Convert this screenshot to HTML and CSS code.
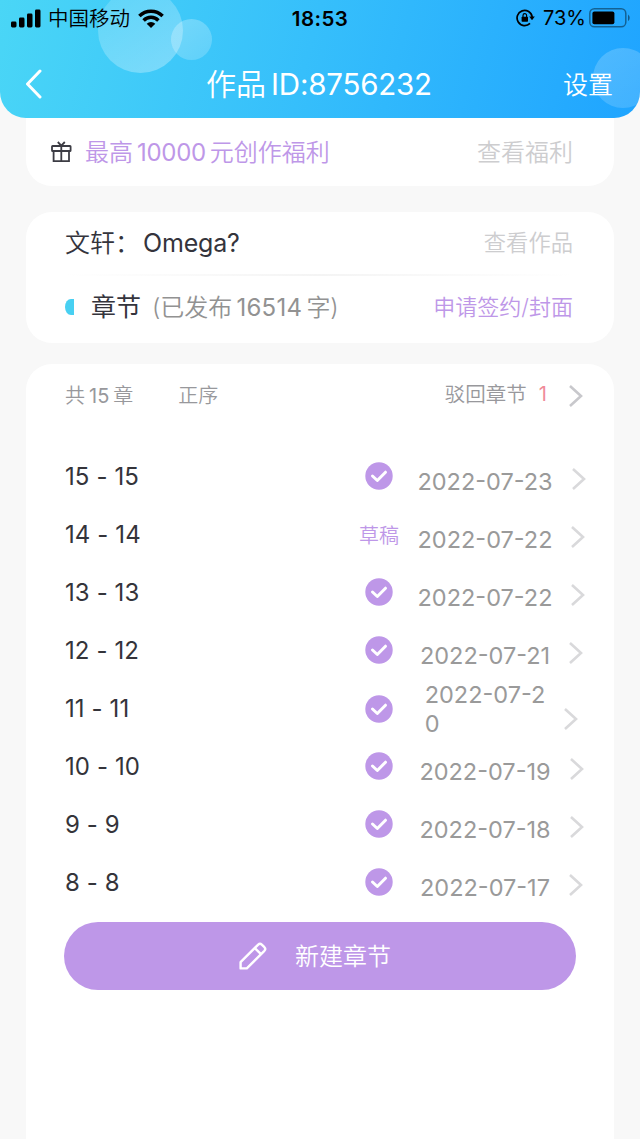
FILE: index.html
```html
<!DOCTYPE html>
<html lang="zh-CN">
<head>
    <meta charset="UTF-8">
    <meta name="viewport" content="width=device-width, initial-scale=1.0">
    <title>作品ID:8756232</title>
    <link rel="stylesheet" href="styles.css">
</head>
<body>
    <div class="wrapper">
        <header class="header">
            <span class="bubble bubble-big"></span>
            <span class="bubble bubble-small"></span>
            <span class="bubble bubble-right"></span>
            <div class="status-bar">
                <div class="status-left">
                    <svg class="signal" width="30" height="19" viewBox="0 0 30 19">
                        <rect x="0" y="12.5" width="5.5" height="6" rx="1.4"/>
                        <rect x="8" y="8.5" width="5.5" height="10" rx="1.4"/>
                        <rect x="16" y="4.5" width="5.5" height="14" rx="1.4"/>
                        <rect x="24" y="0.5" width="5.5" height="18" rx="1.4"/>
                    </svg>
                    <span class="carrier">中国移动</span>
                    <svg class="wifi" width="26" height="19" viewBox="0 0 26 19">
                        <g fill="none" stroke="#000" stroke-width="3.5">
                            <path d="M1.4 7.1A16.4 16.4 0 0 1 24.6 7.1"/>
                            <path d="M5.6 11.4A10.5 10.5 0 0 1 20.4 11.4"/>
                        </g>
                        <path d="M13 19L8.7 14.7A6.2 6.2 0 0 1 17.3 14.7Z"/>
                    </svg>
                </div>
                <span class="time">18:53</span>
                <div class="status-right">
                    <svg class="lock" width="19" height="18" viewBox="0 0 19 18">
                        <path d="M16.2 8A7.6 7.6 0 1 0 14 14.4" fill="none" stroke="#000" stroke-width="1.7"/>
                        <path d="M13.2 7.4h5.6l-2.8 3.8z"/>
                        <rect x="5.6" y="7.7" width="6.4" height="5" rx="0.7"/>
                        <path d="M7 8V6.4a1.8 1.8 0 0 1 3.6 0V8" fill="none" stroke="#000" stroke-width="1.2"/>
                    </svg>
                    <span class="percent">73%</span>
                    <svg class="battery" width="42" height="20" viewBox="0 0 42 20">
                        <rect x="0.8" y="0.8" width="36" height="18" rx="4.6" fill="none" stroke="#000" stroke-opacity="0.42" stroke-width="1.5"/>
                        <rect x="3.4" y="3.4" width="22" height="12.8" rx="2"/>
                        <path d="M39 6.4a4.2 4.2 0 0 1 0 6.8z" fill-opacity="0.45"/>
                    </svg>
                </div>
            </div>
            <div class="nav">
                <svg class="back" width="18" height="30" viewBox="0 0 18 30">
                    <path d="M15 2L2.5 15L15 28" fill="none" stroke="#fff" stroke-width="3" stroke-linecap="round" stroke-linejoin="round"/>
                </svg>
                <h1>作品<span class="title-id">ID:8756232</span></h1>
                <a class="setting">设置</a>
            </div>
        </header>

        <main>
            <section class="card welfare">
                <svg class="gift" width="22" height="22" viewBox="0 0 22 22" fill="none" stroke="#3c3c44" stroke-width="1.8">
                    <rect x="1" y="5" width="18.6" height="5" rx="0.6"/>
                    <path d="M2.6 10V20.2H18V10M10.3 5V20.2M6.8 1L10.3 4.6L13.8 1"/>
                </svg>
                <span class="welfare-text">最高<span class="num">10000</span>元创作福利</span>
                <a class="look">查看福利</a>
            </section>

            <section class="card work">
                <div class="work-row">
                    <span class="work-name">文轩：<span class="omega">Omega?</span></span>
                    <a class="look-work">查看作品</a>
                </div>
                <div class="line"></div>
                <div class="work-row">
                    <i class="mark"></i>
                    <span class="chapter">章节</span>
                    <span class="words">(已发布<span class="num">16514</span>字)</span>
                    <a class="sign">申请签约/封面</a>
                </div>
            </section>

            <section class="card list">
                <div class="list-head">
                    <span>共<span class="num">15</span>章</span>
                    <span class="order">正序</span>
                    <span class="reject">驳回章节</span>
                    <span class="reject-num">1</span>
                    <svg class="arrow" width="16" height="24" viewBox="0 0 16 24"><path d="M2 2L13 12L2 22"/></svg>
                </div>
                <ul>
                    <li>
                        <span class="name">15 - 15</span>
                        <span class="state"><svg class="check" width="28" height="28" viewBox="0 0 28 28"><circle cx="14" cy="14" r="13.7"/><path d="M7.5 14L12.3 18.5L20.5 10.2"/></svg></span>
                        <span class="date"><span>2022-07-23</span><svg class="arrow" width="16" height="24" viewBox="0 0 16 24"><path d="M2 2L13 12L2 22"/></svg></span>
                    </li>
                    <li>
                        <span class="name">14 - 14</span>
                        <span class="state">草稿</span>
                        <span class="date"><span>2022-07-22</span><svg class="arrow" width="16" height="24" viewBox="0 0 16 24"><path d="M2 2L13 12L2 22"/></svg></span>
                    </li>
                    <li>
                        <span class="name">13 - 13</span>
                        <span class="state"><svg class="check" width="28" height="28" viewBox="0 0 28 28"><circle cx="14" cy="14" r="13.7"/><path d="M7.5 14L12.3 18.5L20.5 10.2"/></svg></span>
                        <span class="date"><span>2022-07-22</span><svg class="arrow" width="16" height="24" viewBox="0 0 16 24"><path d="M2 2L13 12L2 22"/></svg></span>
                    </li>
                    <li>
                        <span class="name">12 - 12</span>
                        <span class="state"><svg class="check" width="28" height="28" viewBox="0 0 28 28"><circle cx="14" cy="14" r="13.7"/><path d="M7.5 14L12.3 18.5L20.5 10.2"/></svg></span>
                        <span class="date"><span>2022-07-21</span><svg class="arrow" width="16" height="24" viewBox="0 0 16 24"><path d="M2 2L13 12L2 22"/></svg></span>
                    </li>
                    <li>
                        <span class="name">11 - 11</span>
                        <span class="state"><svg class="check" width="28" height="28" viewBox="0 0 28 28"><circle cx="14" cy="14" r="13.7"/><path d="M7.5 14L12.3 18.5L20.5 10.2"/></svg></span>
                        <span class="date date-wrap"><span>2022-07-2<br>0</span><svg class="arrow" width="16" height="24" viewBox="0 0 16 24"><path d="M2 2L13 12L2 22"/></svg></span>
                    </li>
                    <li>
                        <span class="name">10 - 10</span>
                        <span class="state"><svg class="check" width="28" height="28" viewBox="0 0 28 28"><circle cx="14" cy="14" r="13.7"/><path d="M7.5 14L12.3 18.5L20.5 10.2"/></svg></span>
                        <span class="date"><span>2022-07-19</span><svg class="arrow" width="16" height="24" viewBox="0 0 16 24"><path d="M2 2L13 12L2 22"/></svg></span>
                    </li>
                    <li>
                        <span class="name">9 - 9</span>
                        <span class="state"><svg class="check" width="28" height="28" viewBox="0 0 28 28"><circle cx="14" cy="14" r="13.7"/><path d="M7.5 14L12.3 18.5L20.5 10.2"/></svg></span>
                        <span class="date"><span>2022-07-18</span><svg class="arrow" width="16" height="24" viewBox="0 0 16 24"><path d="M2 2L13 12L2 22"/></svg></span>
                    </li>
                    <li>
                        <span class="name">8 - 8</span>
                        <span class="state"><svg class="check" width="28" height="28" viewBox="0 0 28 28"><circle cx="14" cy="14" r="13.7"/><path d="M7.5 14L12.3 18.5L20.5 10.2"/></svg></span>
                        <span class="date"><span>2022-07-17</span><svg class="arrow" width="16" height="24" viewBox="0 0 16 24"><path d="M2 2L13 12L2 22"/></svg></span>
                    </li>
                </ul>
                <button class="new-btn">
                    <svg width="28" height="28" viewBox="0 0 28 28" fill="none" stroke="#fff" stroke-width="2.4" stroke-linejoin="round">
                        <path d="M1.6 26.4V20.2L19.2 2.6Q21 0.9 22.8 2.6L25.4 5.2Q27.1 7 25.4 8.8L7.8 26.4Z"/>
                        <path d="M15.8 6L22 12.2"/>
                    </svg>
                    <span>新建章节</span>
                </button>
            </section>
        </main>
    </div>
</body>
</html>
```
FILE: styles.css
```css
*{
    box-sizing: border-box;
}
body{
    margin: 0;
    background-color: #f8f8f8;
    font-family: Inter, "Noto Sans CJK SC", sans-serif;
    font-weight: 350;
}
.wrapper{
    width: 640px;
    height: 1139px;
    margin: 0 auto;
    overflow: hidden;
    display: flex;
    flex-direction: column;
}
/* 상단 헤더 */
.header{
    position: relative;
    height: 118px;
    flex: none;
    overflow: hidden;
    border-radius: 0 0 26px 26px;
    background: linear-gradient(105deg, #4ad6f6 0%, #36bffb 48%, #1fa4ff 100%);
}
.bubble{
    position: absolute;
    border-radius: 50%;
    background: linear-gradient(150deg, rgba(255,255,255,0.14), rgba(255,255,255,0.32));
}
.bubble-big{
    width: 85px;
    height: 85px;
    left: 98px;
    top: -12px;
}
.bubble-small{
    width: 41px;
    height: 41px;
    left: 171px;
    top: 19px;
    background: linear-gradient(150deg, rgba(255,255,255,0.28), rgba(255,255,255,0.18));
}
.bubble-right{
    width: 60px;
    height: 60px;
    left: 593px;
    top: 48px;
    background: linear-gradient(150deg, rgba(255,255,255,0.2), rgba(255,255,255,0.14));
}
.status-bar{
    position: relative;
    height: 36px;
    display: grid;
    grid-template-columns: 1fr auto 1fr;
    align-items: center;
    padding: 0 9px 0 11px;
    color: #000;
    font-size: 20px;
    font-weight: 400;
}
.status-left, .status-right{
    display: flex;
    align-items: center;
}
.carrier{
    font-size: 20.5px;
    font-weight: 350;
    margin: 0 8px 0 7px;
    padding-bottom: 2px;
}
.time{
    font-weight: 600;
    font-size: 20.5px;
    letter-spacing: 0.4px;
    margin-right: 2px;
}
.status-right{
    justify-content: flex-end;
}
.percent{
    margin: 0 3px 0 8px;
}
.nav{
    position: relative;
    height: 96px;
    display: grid;
    grid-template-columns: 1fr auto 1fr;
    align-items: center;
    padding: 0 27px 0 25px;
    color: #fff;
}
.nav h1{
    margin: 0;
    padding-bottom: 5px;
    font-size: 30px;
    font-weight: 350;
    white-space: nowrap;
}
.title-id{
    margin-left: 5px;
    font-size: 29.5px;
    font-weight: 400;
    letter-spacing: -0.2px;
}
.setting{
    justify-self: end;
    padding-bottom: 3px;
    font-size: 25px;
}
/* 카드 영역 */
main{
    flex: 1;
    display: flex;
    flex-direction: column;
    padding: 0 26px;
}
.card{
    background-color: #fff;
    border-radius: 26px;
}
.num{
    margin: 0 4px;
    font-weight: 400;
}
.welfare{
    height: 68px;
    display: flex;
    align-items: center;
    padding: 0 41px 0 25px;
    border-radius: 0 0 26px 26px;
    font-size: 24px;
}
.welfare-text{
    margin-left: 12px;
    color: #be97e8;
}
.welfare-text .num{
    letter-spacing: -0.3px;
}
.welfare-text, .look{
    padding-bottom: 4px;
}
.look, .look-work{
    margin-left: auto;
    color: #cdcdcf;
}
.look-work{
    font-size: 22.3px;
}
.work{
    height: 131px;
    margin-top: 26px;
    padding: 0 41px 0 39px;
}
.work-row{
    height: 62px;
    display: flex;
    align-items: center;
    font-size: 25px;
    color: #34343c;
}
.work-row span, .work-row a{
    padding-bottom: 4px;
}
.omega{
    margin-left: 3px;
    font-weight: 400;
    letter-spacing: -0.2px;
}
.line{
    height: 2px;
    background: linear-gradient(90deg, #fff, #f4f4f4 50%, #fff);
}
.mark{
    width: 9px;
    height: 16px;
    border-radius: 6px 0 0 6px / 8px 0 0 8px;
    background-color: #48d0f2;
}
.chapter{
    margin-left: 17px;
    font-weight: 400;
}
.words{
    margin-left: 11px;
    font-size: 24px;
    color: #929292;
}
.words .num{
    letter-spacing: 0.3px;
}
.sign{
    margin-left: auto;
    font-size: 22px;
    color: #be97e8;
}
.list{
    flex: 1;
    margin-top: 21px;
    border-radius: 26px 26px 0 0;
    padding: 0 26px 0 39px;
}
.list-head{
    height: 62px;
    display: flex;
    align-items: center;
    font-size: 20px;
    color: #98989c;
}
.list-head span{
    padding-bottom: 2px;
}
.order{
    margin-left: 45px;
}
.reject{
    margin-left: auto;
    font-size: 20.5px;
}
.list-head .reject{
    padding-bottom: 4px;
}
.reject-num{
    margin: 0 21px 0 12px;
    font-weight: 400;
    color: #f08c98;
}
.arrow{
    fill: none;
    stroke: #d9d9db;
    stroke-width: 2.6;
}
.list-head .arrow{
    margin: 2px 4px 0 0;
    stroke: #c8c8cc;
}
.list ul{
    list-style: none;
    margin: 21px 0 0;
    padding: 0;
}
.list li{
    height: 58px;
    display: grid;
    grid-template-columns: 1fr 56px 189px;
    align-items: center;
    margin-right: -8px;
    font-size: 24px;
}
.name{
    font-weight: 400;
    letter-spacing: 0.1px;
    color: #34343a;
}
.state{
    display: flex;
    justify-content: center;
    font-size: 20px;
    color: #be97e8;
}
.check circle{
    fill: #be97e8;
}
.check path{
    fill: none;
    stroke: #fff;
    stroke-width: 3;
    stroke-linecap: round;
    stroke-linejoin: round;
}
.date{
    display: flex;
    justify-content: center;
    align-items: center;
    gap: 18px;
    padding: 11px 0 0 1px;
    font-size: 23.5px;
    font-weight: 400;
    line-height: 29px;
    color: #9a9a9a;
}
.date .arrow{
    margin-bottom: 6px;
}
/* 날짜가 두줄로 내려간 경우 */
.date-wrap{
    padding-top: 1px;
    align-items: flex-end;
}
.date-wrap .arrow{
    margin-bottom: 7px;
}
.new-btn{
    width: 512px;
    height: 68px;
    margin: 11px 0 0 -1px;
    padding: 0 10px 0 0;
    border: none;
    border-radius: 34px;
    background-color: #be97e8;
    color: #fff;
    display: flex;
    justify-content: center;
    align-items: center;
    gap: 28px;
    font-family: inherit;
    font-size: 24px;
    font-weight: 350;
}
.new-btn span{
    padding-bottom: 3px;
}
```
